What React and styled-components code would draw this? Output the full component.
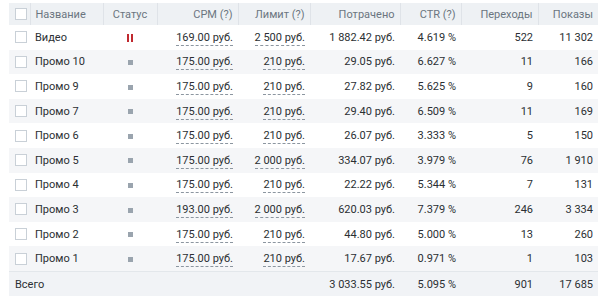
import styled, { createGlobalStyle } from 'styled-components';

const GlobalStyle = createGlobalStyle`
  body {
    margin: 0;
    padding: 3px 6px 0 9px;
    background: #fff;
    font-family: Roboto, "Liberation Sans", sans-serif;
    font-size: 11px;
    color: #2b2f33;
  }
`;

const Table = styled.table`
  width: 589px;
  border-collapse: collapse;
  table-layout: fixed;
`;

const HeadCell = styled.th`
  height: 22px;
  padding: 0 5px;
  background: #eef1f4;
  color: #6b7580;
  font-weight: 400;
  text-align: ${(p) => p.$align || 'right'};
  border-left: 1px solid #dfe3e8;
  white-space: nowrap;

  &:first-child {
    border-left: none;
  }
`;

const Row = styled.tr`
  background: ${(p) => (p.$striped ? '#f5f6f8' : '#fff')};
`;

const FootRow = styled.tr`
  background: #f1f3f6;
  border-top: 1px solid #e3e7eb;
  border-bottom: 1px solid #e3e7eb;
`;

const Cell = styled.td`
  height: 24.6px;
  padding: 0 5px;
  text-align: ${(p) => p.$align || 'right'};
  white-space: nowrap;
`;

const TotalLabel = styled(Cell)`
  padding-left: 6px;
`;

const Check = styled.span`
  display: block;
  width: 10px;
  height: 10px;
  margin-left: 1px;
  border: 1px solid #c9d0d7;
  background: #fff;
`;

const Dashed = styled.span`
  border-bottom: 1px dashed #8c96a0;
  padding-bottom: 1px;
  cursor: pointer;
`;

const Stopped = styled.span`
  display: inline-block;
  width: 5px;
  height: 5px;
  background: #9aa4ae;
  vertical-align: middle;
`;

const Paused = styled.span`
  display: inline-flex;
  gap: 2px;
  vertical-align: middle;

  &::before,
  &::after {
    content: '';
    width: 2px;
    height: 8px;
    background: #c0292f;
  }
`;

const rows = [
  ['Видео', true, '169.00 руб.', '2 500 руб.', '1 882.42 руб.', '4.619 %', '522', '11 302'],
  ['Промо 10', false, '175.00 руб.', '210 руб.', '29.05 руб.', '6.627 %', '11', '166'],
  ['Промо 9', false, '175.00 руб.', '210 руб.', '27.82 руб.', '5.625 %', '9', '160'],
  ['Промо 7', false, '175.00 руб.', '210 руб.', '29.40 руб.', '6.509 %', '11', '169'],
  ['Промо 6', false, '175.00 руб.', '210 руб.', '26.07 руб.', '3.333 %', '5', '150'],
  ['Промо 5', false, '175.00 руб.', '2 000 руб.', '334.07 руб.', '3.979 %', '76', '1 910'],
  ['Промо 4', false, '175.00 руб.', '210 руб.', '22.22 руб.', '5.344 %', '7', '131'],
  ['Промо 3', false, '193.00 руб.', '2 000 руб.', '620.03 руб.', '7.379 %', '246', '3 334'],
  ['Промо 2', false, '175.00 руб.', '210 руб.', '44.80 руб.', '5.000 %', '13', '260'],
  ['Промо 1', false, '175.00 руб.', '210 руб.', '17.67 руб.', '0.971 %', '1', '103'],
];

export default function App() {
  return (
    <>
      <GlobalStyle />
      <Table>
        <colgroup>
          <col style={{ width: 21 }} />
          <col style={{ width: 73 }} />
          <col style={{ width: 54 }} />
          <col style={{ width: 81 }} />
          <col style={{ width: 72 }} />
          <col style={{ width: 90 }} />
          <col style={{ width: 61 }} />
          <col style={{ width: 77 }} />
          <col />
        </colgroup>
        <thead>
          <tr>
            <HeadCell $align="left">
              <Check />
            </HeadCell>
            <HeadCell $align="left">Название</HeadCell>
            <HeadCell $align="center">Статус</HeadCell>
            <HeadCell>CPM (?)</HeadCell>
            <HeadCell>Лимит (?)</HeadCell>
            <HeadCell>Потрачено</HeadCell>
            <HeadCell>CTR (?)</HeadCell>
            <HeadCell>Переходы</HeadCell>
            <HeadCell>Показы</HeadCell>
          </tr>
        </thead>
        <tbody>
          {rows.map(([name, paused, cpm, limit, spent, ctr, clicks, shows], i) => (
            <Row key={name} $striped={i % 2 === 1}>
              <Cell $align="left">
                <Check />
              </Cell>
              <Cell $align="left">{name}</Cell>
              <Cell $align="center">{paused ? <Paused /> : <Stopped />}</Cell>
              <Cell>
                <Dashed>{cpm}</Dashed>
              </Cell>
              <Cell>
                <Dashed>{limit}</Dashed>
              </Cell>
              <Cell>{spent}</Cell>
              <Cell>{ctr}</Cell>
              <Cell>{clicks}</Cell>
              <Cell>{shows}</Cell>
            </Row>
          ))}
          <FootRow>
            <TotalLabel colSpan={2} $align="left">Всего</TotalLabel>
            <Cell />
            <Cell />
            <Cell />
            <Cell>3 033.55 руб.</Cell>
            <Cell>5.095 %</Cell>
            <Cell>901</Cell>
            <Cell>17 685</Cell>
          </FootRow>
        </tbody>
      </Table>
    </>
  );
}
